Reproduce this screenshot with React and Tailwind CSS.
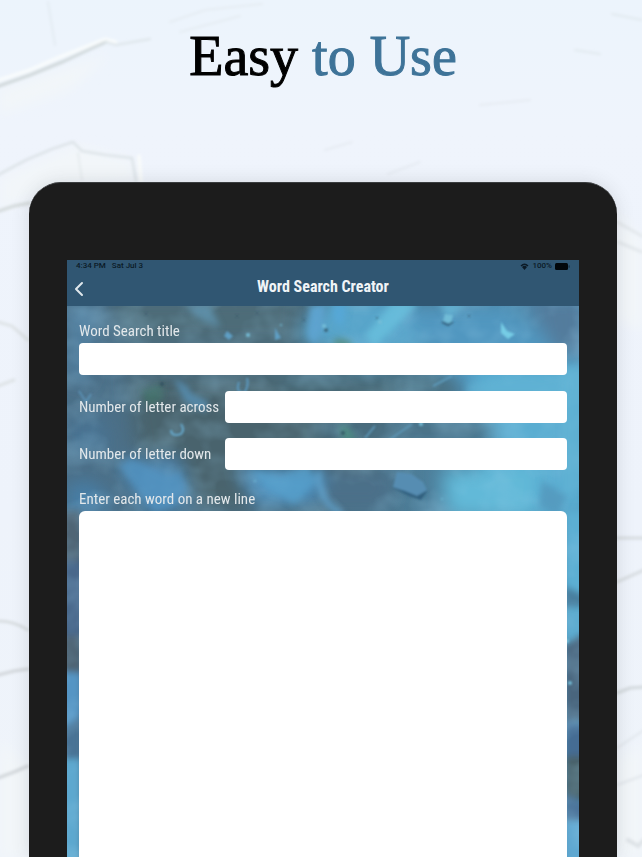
import React, { useState } from 'react'
import { ChevronLeft } from 'lucide-react'

// Painted plaster wall behind the tablet
const PlasterBackground = () => (
  <svg
    className="absolute inset-0 w-full h-full"
    viewBox="0 0 642 857"
    preserveAspectRatio="xMidYMin slice"
    aria-hidden="true"
  >
    <defs>
      <linearGradient id="wall" x1="0" y1="0" x2="0" y2="1">
        <stop offset="0" stopColor="#ecf4fc" />
        <stop offset="0.15" stopColor="#eff4fc" />
        <stop offset="0.6" stopColor="#eef3fb" />
        <stop offset="1" stopColor="#eff4fa" />
      </linearGradient>
      <filter id="wallSoft" x="-10%" y="-10%" width="120%" height="120%">
        <feGaussianBlur stdDeviation="1.5" />
      </filter>
      <filter id="wallHaze" x="-20%" y="-20%" width="140%" height="140%">
        <feGaussianBlur stdDeviation="6" />
      </filter>
    </defs>
    <rect width="642" height="857" fill="url(#wall)" />
    <g filter="url(#wallHaze)" fill="#f2f6f9">
      <path d="M0 90 L60 70 L110 54 L70 90 L0 115 Z" />
      <path d="M0 178 L76 145 L132 160 L136 182 L60 186 L0 210 Z" />
      <path d="M617 210 L642 240 L642 330 L617 320 Z" />
      <path d="M0 740 L30 770 L30 857 L0 857 Z" />
      <path d="M617 760 L642 745 L642 857 L617 857 Z" />
    </g>
    <g filter="url(#wallSoft)" fill="none" strokeLinecap="round">
      <path d="M-4 81 L30 70 L60 57 L88 46 L105 39 L116 42" stroke="#fafdfd" strokeWidth="3" />
      <path d="M-4 87 L30 75 L62 62 L88 50 L106 42" stroke="#cfd7d9" strokeWidth="3" />
      <path d="M106 42 L116 45 L150 39" stroke="#dce4e8" strokeWidth="2" />
      <path d="M-4 176 L26 160 L52 149 L73 142 L82 151 L106 155 L132 158 L136 181" stroke="#d9e0e4" strokeWidth="2" />
      <path d="M139 156 L141 181" stroke="#fbfdfb" strokeWidth="3" />
      <path d="M78 153 L82 180" stroke="#e2e8ea" strokeWidth="1.5" />
      <path d="M-4 212 L14 206 L30 203" stroke="#d3d9da" strokeWidth="3" />
      <path d="M48 2 L55 45" stroke="#e3ebf2" strokeWidth="2" />
      <path d="M170 22 L205 10 L262 4 M180 32 L240 16" stroke="#e5ecf2" strokeWidth="2" />
      <path d="M325 150 L352 142 M388 174 L420 162 M480 105 L530 100" stroke="#e6ebf2" strokeWidth="2" />
      <path d="M612 14 L642 20 M575 50 L600 54" stroke="#e1e9ee" strokeWidth="2" />
      <path d="M617 222 L642 236 M618 242 L642 252" stroke="#e3e8ec" strokeWidth="3" />
      <path d="M-2 322 L12 326 L28 340 M-2 386 L14 380" stroke="#dee3e6" strokeWidth="3" />
      <path d="M-2 621 Q14 621 28 630" stroke="#d4d9dc" strokeWidth="2.5" />
      <path d="M-2 675 L14 671 L28 669 M-2 778 L14 772 L28 766" stroke="#d1d6da" strokeWidth="3" />
      <path d="M617 538 L644 538 M617 582 L644 570" stroke="#d6dbdf" strokeWidth="3" />
      <path d="M617 693 L630 688 L644 687" stroke="#d3d9dd" strokeWidth="3" />
      <path d="M617 748 L644 730 M617 785 L644 775" stroke="#e1e6eb" strokeWidth="2" />
      <path d="M628 840 L638 846 L644 840" stroke="#dee3e7" strokeWidth="4" />
    </g>
  </svg>
)

// Underwater artwork behind the form
const WaterBackground = () => (
  <svg
    className="absolute inset-0 w-full h-full"
    viewBox="0 0 512 551"
    preserveAspectRatio="xMidYMin slice"
    aria-hidden="true"
  >
    <defs>
      <linearGradient id="deep" x1="0" y1="0" x2="1" y2="0">
        <stop offset="0" stopColor="#4b6f88" />
        <stop offset="0.45" stopColor="#4b6d7f" />
        <stop offset="1" stopColor="#4f93ba" />
      </linearGradient>
      <filter id="cloud" x="-30%" y="-30%" width="160%" height="160%">
        <feGaussianBlur stdDeviation="9" />
      </filter>
      <filter id="soft" x="-30%" y="-30%" width="160%" height="160%">
        <feGaussianBlur stdDeviation="3" />
      </filter>
      <filter id="fine" x="-30%" y="-30%" width="160%" height="160%">
        <feGaussianBlur stdDeviation="0.9" />
      </filter>
      <filter id="grain" x="0" y="0" width="100%" height="100%">
        <feTurbulence type="fractalNoise" baseFrequency="0.026 0.03" numOctaves="3" seed="8" />
        <feColorMatrix values="0 0 0 0 0.32  0 0 0 0 0.62  0 0 0 0 0.82  2 0 0 0 -0.8" />
      </filter>
    </defs>
    <rect width="512" height="551" fill="url(#deep)" />

    <g filter="url(#cloud)">
      <path d="M40 -10 H230 V38 H60 Z" fill="#4e6c78" />
      <path d="M60 70 L330 68 L300 205 L80 200 Z" fill="#49636d" />
      <path d="M0 0 L30 0 L20 80 L0 70 Z" fill="#4f7d9d" />
      <path d="M265 -10 L340 -10 L380 40 L300 60 L230 30 Z" fill="#59a5ca" />
      <path d="M330 0 L440 0 L512 60 L512 130 L400 100 Z" fill="#5197c0" />
      <path d="M455 -10 L520 -10 V60 L490 50 Z" fill="#527c9c" />
      <path d="M400 60 L520 55 V210 L380 210 L430 130 Z" fill="#5aadd1" />
      <path d="M200 70 L390 70 L400 90 L220 88 Z" fill="#496d7b" />
      <path d="M250 115 L420 115 L430 135 L250 135 Z" fill="#4a6f84" />
      <path d="M50 158 L110 150 L125 200 L80 210 Z" fill="#4b84ae" />
      <path d="M170 160 L260 165 L250 198 L190 200 Z" fill="#4d8ebb" />
      <path d="M0 115 L35 110 L45 145 L0 150 Z" fill="#487393" />
      <path d="M0 178 L25 175 L50 200 L0 215 Z" fill="#477ea6" />
      <path d="M260 160 L330 165 L320 205 L255 205 Z" fill="#4b7089" />
      <path d="M375 165 L470 160 L465 215 L380 210 Z" fill="#62b9d8" />
    </g>

    {/* left and right edges beside the word list */}
    <g filter="url(#soft)">
      <path d="M-8 205 H14 V370 H-8 Z" fill="#4f6575" />
      <path d="M-8 255 H14 V330 H-8 Z" fill="#49688b" />
      <path d="M-8 365 L14 367 V408 L-8 440 Z" fill="#5595c4" />
      <path d="M-8 425 L14 410 V455 H-8 Z" fill="#4a7395" />
      <path d="M-8 453 H14 V565 H-8 Z" fill="#5da8cf" />
      <path d="M498 205 H520 V290 H498 Z" fill="#5cafd3" />
      <path d="M498 280 L520 290 V305 H498 Z" fill="#487f9f" />
      <path d="M498 302 L520 300 V330 L498 338 Z" fill="#5cabcf" />
      <path d="M498 338 L520 325 V415 H498 Z" fill="#49657d" />
      <path d="M498 415 L520 420 V455 L498 450 Z" fill="#456c93" />
      <path d="M498 450 H520 V495 L498 490 Z" fill="#4a626b" />
      <path d="M498 488 L520 500 V520 H498 Z" fill="#4b739a" />
      <path d="M498 515 H520 V565 H498 Z" fill="#5ea8d1" />
    </g>

    <rect width="512" height="551" filter="url(#grain)" opacity="0.32" />

    <g filter="url(#soft)">
      <path d="M118 0 L142 -2 L154 22 L134 14 Z" fill="#6398b6" opacity="0.7" />
      <path d="M243 0 L259 -2 L256 24 L248 40 L240 30 Z" fill="#5da3cf" />
      <path d="M265 -2 L280 -2 L276 22 L266 14 Z" fill="#57a7d6" />
      <path d="M325 -4 L352 -4 L325 25 L308 40 L298 30 Z" fill="#69c0dd" opacity="0.8" />
      <path d="M370 -4 L400 -4 L382 12 Z" fill="#69c0dd" opacity="0.6" />
      <path d="M106 72 L118 78 L126 88 L142 96 L138 106 L118 96 Z" fill="#5588a8" />
      <path d="M75 84 L95 78 L96 92 L86 102 L78 96 Z" fill="#3f7769" opacity="0.6" />
      <path d="M268 32 L282 34 L286 42 L266 42 Z" fill="#568e88" />
      <path d="M272 118 L282 122 L290 135 L276 134 Z" fill="#4c9182" opacity="0.8" />
      <path d="M52 160 L64 152 L100 170 L114 166 L120 184 L106 200 L88 206 L70 184 Z" fill="#5293c2" opacity="0.75" />
      <path d="M184 165 L215 170 L240 160 L250 175 L228 198 L200 184 Z" fill="#57a3cf" opacity="0.7" />
      <path d="M252 165 Q250 195 275 208" fill="none" stroke="#60a3cd" strokeWidth="5" />
      <path d="M400 78 L440 70 L500 72 L500 90 L400 90 Z" fill="#62b4d6" opacity="0.6" />
      <path d="M496 62 L520 58 V180 L496 190 Z" fill="#62b4d6" opacity="0.6" />
      <path d="M475 175 L500 190 L490 210 L472 200 Z" fill="#559bc0" />
    </g>

    <g filter="url(#fine)">
      <path d="M326 181 L330 166 L344 168 L356 176 L360 184 L350 190 Z" fill="#578db2" />
      <path d="M324 181 L338 185 L350 190 L361 184 L354 194 L342 190 Z" fill="#30607f" />
      <path d="M378 8 L386 9 L384 18 L376 15 Z" fill="#71bcd7" />
      <path d="M375 16 L381 19 L386 16" fill="none" stroke="#356582" strokeWidth="2" />
      <path d="M434 16 L440 25 L448 28 L441 33 L434 27 Z" fill="#76cce5" />
      <path d="M160 25 L166 30 L162 34 L157 30 Z M208 22 L214 32 L208 34 Z" fill="#5e9fc5" />
      <path d="M172 76 Q168 88 178 86 Q182 78 180 72" fill="none" stroke="#5b99bf" strokeWidth="2" />
      <path d="M104 124 Q104 131 114 128 Q118 124 114 118" fill="none" stroke="#65a7ca" strokeWidth="2" />
      <path d="M298 132 L308 120 M322 134 L345 118 M366 80 L385 70" stroke="#5f9dbf" strokeWidth="1.5" />
      <path d="M12 85 L19 96 L24 88" fill="none" stroke="#5b94b9" strokeWidth="1.5" />
      <g fill="#75bed8">
        <circle cx="181" cy="29" r="2" />
        <circle cx="214" cy="19" r="1" />
        <circle cx="257" cy="20" r="2" />
        <circle cx="313" cy="16" r="2" />
        <circle cx="354" cy="118" r="2" />
        <circle cx="375" cy="193" r="1" />
        <circle cx="188" cy="175" r="1" />
        <circle cx="500" cy="335" r="2" />
        <circle cx="503" cy="377" r="2" />
      </g>
      <g fill="#304e5d" opacity="0.7">
        <circle cx="79" cy="8" r="1" />
        <circle cx="170" cy="10" r="1" />
        <circle cx="190" cy="7" r="1" />
        <circle cx="237" cy="14" r="1" />
        <circle cx="259" cy="24" r="2" />
        <circle cx="310" cy="12" r="1" />
        <circle cx="402" cy="10" r="1" />
        <circle cx="276" cy="127" r="2" />
        <circle cx="95" cy="78" r="2" />
      </g>
    </g>
  </svg>
)

const StatusBar = () => (
  <div className="flex items-center justify-between h-3 px-[9px] text-[8px] leading-3 font-medium text-[#0b1a26] font-['Roboto',sans-serif]">
    <div className="flex gap-[6px]">
      <span>4:34 PM</span>
      <span>Sat Jul 3</span>
    </div>
    <div className="flex items-center gap-[3px]">
      <svg width="9" height="7" viewBox="0 0 18 14" aria-hidden="true">
        <path d="M1 5 Q9 -3 17 5 L15 7 Q9 1 3 7 Z" fill="#0b1a26" />
        <path d="M4 8 Q9 3 14 8 L9 14 Z" fill="#0b1a26" />
      </svg>
      <span>100%</span>
      <svg width="15" height="7" viewBox="0 0 15 7" aria-hidden="true">
        <rect width="13" height="7" rx="1.5" fill="#02070b" />
        <rect x="13.6" y="2.2" width="1" height="2.6" rx="0.5" fill="#122a3d" />
      </svg>
    </div>
  </div>
)

const labelClass = 'text-[15px] leading-5 text-[#e3e8eb] whitespace-nowrap'
const inputClass = 'h-8 min-w-0 px-2 bg-white rounded text-base text-gray-900 focus:outline-none'

const App = () => {
  const [title, setTitle] = useState('')
  const [across, setAcross] = useState('')
  const [down, setDown] = useState('')
  const [words, setWords] = useState('')

  return (
    <div className="relative flex flex-col min-h-screen overflow-hidden">
      <PlasterBackground />

      <div className="relative flex flex-col flex-1 pl-[29px] pr-[25px]">
        <h1 className="pt-5 pb-[90px] text-center text-[56px] leading-[72px] text-black font-['Liberation_Serif',serif] [-webkit-text-stroke:1px]">
          Easy <span className="text-[#3e7398]">to Use</span>
        </h1>

        {/* Tablet */}
        <div className="flex flex-col flex-1 px-[38px] pt-[77px] bg-[#1c1c1c] border-t border-[#3a3d3f] rounded-t-[32px] shadow-[0_0_18px_rgba(60,60,60,0.15)]">
          <div className="flex flex-col flex-1 font-['Roboto_Condensed','Liberation_Sans_Narrow',sans-serif]">
            <header className="bg-[#305672]">
              <StatusBar />
              <div className="grid grid-cols-[1fr_auto_1fr] items-center h-[34px]">
                <button type="button" aria-label="Back" className="justify-self-start text-[#dfe7ec]">
                  <ChevronLeft className="w-6 h-6" strokeWidth={2} />
                </button>
                <h2 className="pb-1 text-base leading-5 font-bold text-[#f0f4f7]">Word Search Creator</h2>
              </div>
            </header>

            <main className="relative flex flex-col flex-1 overflow-hidden">
              <WaterBackground />
              <form className="relative flex flex-col flex-1 px-3 pt-[15px]" onSubmit={(e) => e.preventDefault()}>
                <div className="flex flex-col gap-[2px]">
                  <label htmlFor="title" className={labelClass}>Word Search title</label>
                  <input id="title" type="text" value={title} onChange={(e) => setTitle(e.target.value)} className={inputClass} />
                </div>

                <div className="grid grid-cols-[140px_1fr] items-center gap-x-[6px] gap-y-[15px] mt-4">
                  <label htmlFor="across" className={labelClass}>Number of letter across</label>
                  <input id="across" type="text" inputMode="numeric" value={across} onChange={(e) => setAcross(e.target.value)} className={inputClass} />
                  <label htmlFor="down" className={labelClass}>Number of letter down</label>
                  <input id="down" type="text" inputMode="numeric" value={down} onChange={(e) => setDown(e.target.value)} className={inputClass} />
                </div>

                <div className="flex flex-col flex-1 gap-[2px] mt-[19px]">
                  <label htmlFor="words" className={labelClass}>Enter each word on a new line</label>
                  <textarea
                    id="words"
                    value={words}
                    onChange={(e) => setWords(e.target.value)}
                    className="flex-1 min-h-40 p-2 bg-white rounded-t-md text-base text-gray-900 resize-none focus:outline-none"
                  />
                </div>
              </form>
            </main>
          </div>
        </div>
      </div>
    </div>
  )
}

export default App
